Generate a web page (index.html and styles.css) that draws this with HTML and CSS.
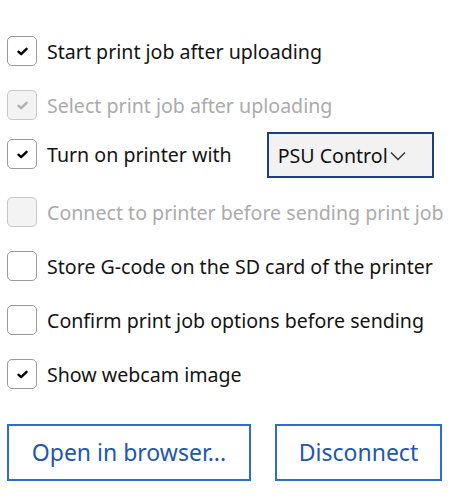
FILE: index.html
```html
<!DOCTYPE html>
<html>
<head>
<meta charset="utf-8">
<link rel="stylesheet" href="styles.css">
</head>
<body>
<div class="panel">
  <div class="options">
    <label class="row">
      <span class="box checked"><svg viewBox="0 0 12 10" width="11" height="9"><path d="M1.5 5.2 L4.5 8 L10.5 2" fill="none" stroke="currentColor" stroke-width="2.6" stroke-linecap="round" stroke-linejoin="round"/></svg></span>
      <span class="text">Start print job after uploading</span>
    </label>
    <label class="row disabled">
      <span class="box checked"><svg viewBox="0 0 12 10" width="11" height="9"><path d="M1.5 5.2 L4.5 8 L10.5 2" fill="none" stroke="currentColor" stroke-width="2.6" stroke-linecap="round" stroke-linejoin="round"/></svg></span>
      <span class="text">Select print job after uploading</span>
    </label>
    <div class="row row-select">
      <span class="box checked"><svg viewBox="0 0 12 10" width="11" height="9"><path d="M1.5 5.2 L4.5 8 L10.5 2" fill="none" stroke="currentColor" stroke-width="2.6" stroke-linecap="round" stroke-linejoin="round"/></svg></span>
      <span class="text">Turn on printer with</span>
      <span class="select">PSU Control<svg class="chev" viewBox="0 0 16 10" width="16" height="10"><path d="M1 1.5 L8 8.5 L15 1.5" fill="none" stroke="currentColor" stroke-width="1.4"/></svg></span>
    </div>
    <label class="row disabled">
      <span class="box"></span>
      <span class="text">Connect to printer before sending print job</span>
    </label>
    <label class="row">
      <span class="box"></span>
      <span class="text">Store G-code on the SD card of the printer</span>
    </label>
    <label class="row">
      <span class="box"></span>
      <span class="text">Confirm print job options before sending</span>
    </label>
    <label class="row">
      <span class="box checked"><svg viewBox="0 0 12 10" width="11" height="9"><path d="M1.5 5.2 L4.5 8 L10.5 2" fill="none" stroke="currentColor" stroke-width="2.6" stroke-linecap="round" stroke-linejoin="round"/></svg></span>
      <span class="text">Show webcam image</span>
    </label>
  </div>
  <div class="buttons">
    <button class="btn btn-open">Open in browser...</button>
    <button class="btn btn-disc">Disconnect</button>
  </div>
</div>
</body>
</html>
```
FILE: styles.css
```css
html, body {
  margin: 0;
  background: #ffffff;
}
body {
  font-family: "Noto Sans", "Open Sans", sans-serif;
  color: #141414;
}
.panel {
  padding: 36px 0 0 7px;
  display: flex;
  flex-direction: column;
  gap: 35px;
}
.options {
  display: flex;
  flex-direction: column;
  gap: 24px;
}
.row {
  display: flex;
  align-items: center;
  height: 30px;
  gap: 10px;
  font-size: 19.6px;
  white-space: nowrap;
}
.row-select {
  margin-top: -5px;
  margin-bottom: 4px;
}
.box {
  box-sizing: border-box;
  width: 30px;
  height: 30px;
  flex: none;
  border: 1.5px solid #9a9a9a;
  border-radius: 5px;
  background: #ffffff;
  display: flex;
  align-items: center;
  justify-content: center;
  color: #000;
}
.disabled .text {
  color: #ababab;
}
.disabled .box {
  border-color: #c8c8c8;
  background: #f3f3f3;
  color: #b0b0b0;
}
.select {
  box-sizing: border-box;
  margin-left: 25px;
  margin-top: -6px;
  margin-bottom: -8px;
  width: 167px;
  height: 46px;
  border: 2px solid #1e3d82;
  background: #f2f2f2;
  display: flex;
  align-items: center;
  padding-left: 9px;
  color: #111;
}
.chev {
  margin-left: 2px;
  margin-top: 2px;
  color: #333;
}
.buttons {
  display: flex;
  gap: 24px;
}
.btn {
  box-sizing: border-box;
  height: 57px;
  border: 2px solid #2f6ccc;
  background: #ffffff;
  color: #2157b0;
  font-family: "Noto Sans", "Open Sans", sans-serif;
  font-size: 23px;
  padding: 0 0 2px;
}
.btn-open {
  width: 244px;
}
.btn-disc {
  width: 167px;
}
```
